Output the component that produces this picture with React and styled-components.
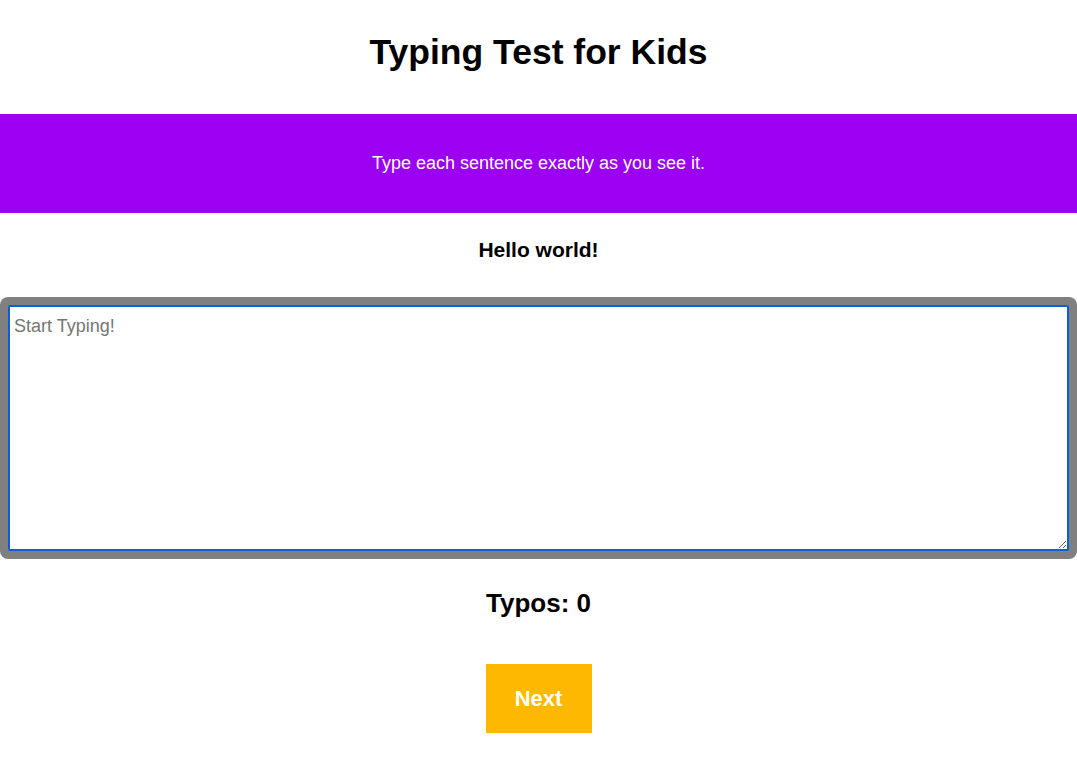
import React, { useState } from 'react';
import styled, { createGlobalStyle } from 'styled-components';

const GlobalStyle = createGlobalStyle`
  body {
    margin: 0;
    background: #fff;
    font-family: "Liberation Sans", Arial, sans-serif;
    overflow-x: hidden;
  }
`;

const Page = styled.div`
  display: flex;
  flex-direction: column;
  align-items: center;
  text-align: center;
`;

const Title = styled.h1`
  margin: 32px 0 42px;
  font-size: 35.5px;
  line-height: 40px;
  font-weight: bold;
  color: #000;
`;

const Banner = styled.div`
  align-self: stretch;
  background: #9b00f0;
  color: #fff;
  font-size: 18px;
  line-height: 21px;
  padding: 39px 0;
`;

const Sentence = styled.p`
  margin: 25px 0 35px;
  font-size: 21px;
  line-height: 24px;
  font-weight: bold;
`;

const InputFrame = styled.div`
  align-self: stretch;
  background: #808080;
  border-radius: 8px;
  padding: 8px;
  display: flex;
`;

const TypingArea = styled.textarea`
  flex: 1;
  height: 246px;
  box-sizing: border-box;
  border: 2px solid #0a60d8;
  border-radius: 2px;
  padding: 9px 4px 4px;
  font-family: "Liberation Sans", Arial, sans-serif;
  font-size: 18px;
  outline: none;
  background: #fff;

  &::placeholder {
    color: #757575;
  }
`;

const Typos = styled.h2`
  margin: 29px 0 46px;
  font-size: 26px;
  line-height: 30px;
  font-weight: bold;
`;

const NextButton = styled.button`
  background: #ffb800;
  color: #fff;
  border: none;
  font-family: "Liberation Sans", Arial, sans-serif;
  font-size: 22px;
  font-weight: bold;
  width: 106px;
  height: 69px;
  cursor: pointer;
`;

const App = () => {
  const [text, setText] = useState('');
  return (
    <>
      <GlobalStyle />
      <Page>
        <Title>Typing Test for Kids</Title>
        <Banner>Type each sentence exactly as you see it.</Banner>
        <Sentence>Hello world!</Sentence>
        <InputFrame>
          <TypingArea
            placeholder="Start Typing!"
            value={text}
            onChange={(e) => setText(e.target.value)}
          />
        </InputFrame>
        <Typos>Typos: 0</Typos>
        <NextButton>Next</NextButton>
      </Page>
    </>
  );
};

export default App;
